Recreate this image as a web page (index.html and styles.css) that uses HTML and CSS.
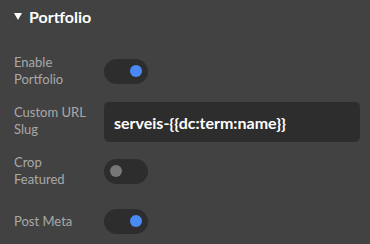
FILE: index.html
```html
<!DOCTYPE html>
<html>
<head>
<meta charset="utf-8">
<link rel="stylesheet" href="styles.css">
</head>
<body>
<div class="panel">
  <div class="header">
    <span class="caret"></span>
    <span class="title">Portfolio</span>
  </div>
  <div class="row">
    <div class="label">Enable<br>Portfolio</div>
    <div class="toggle on"><span class="knob"></span></div>
  </div>
  <div class="row">
    <div class="label">Custom URL<br>Slug</div>
    <div class="input">serveis-{{dc:term:name}}</div>
  </div>
  <div class="row">
    <div class="label">Crop<br>Featured</div>
    <div class="toggle"><span class="knob"></span></div>
  </div>
  <div class="row">
    <div class="label">Post Meta</div>
    <div class="toggle on"><span class="knob"></span></div>
  </div>
</div>
</body>
</html>
```
FILE: styles.css
```css
html, body {
  margin: 0;
  padding: 0;
  background: #424242;
}
.panel {
  width: 370px;
  height: 244px;
  background: #424242;
  font-family: Lato, "Open Sans", sans-serif;
}
.header {
  height: 46px;
  display: flex;
  align-items: flex-start;
  padding: 7px 0 0 14px;
  box-sizing: border-box;
}
.caret {
  width: 0;
  height: 0;
  border-left: 4px solid transparent;
  border-right: 4px solid transparent;
  border-top: 7px solid #ffffff;
  margin-top: 6px;
  margin-right: 7px;
}
.title {
  color: #ffffff;
  font-weight: 700;
  font-size: 16px;
  line-height: 19px;
}
.row {
  height: 50px;
  display: flex;
  align-items: center;
  padding-left: 14px;
}
.label {
  width: 90px;
  color: #a9a9a9;
  font-size: 13px;
  line-height: 17px;
}
.toggle {
  width: 44px;
  height: 25px;
  border-radius: 13px;
  background: #2d2d2d;
  display: flex;
  align-items: center;
  padding: 0 6px;
  box-sizing: border-box;
}
.toggle.on {
  justify-content: flex-end;
}
.knob {
  width: 12px;
  height: 12px;
  border-radius: 50%;
  background: #777777;
}
.toggle.on .knob {
  background: #4a8af4;
}
.input {
  width: 256px;
  height: 40px;
  margin-top: 2px;
  background: #2d2d2d;
  border-radius: 5px;
  box-sizing: border-box;
  padding-left: 10px;
  display: flex;
  align-items: center;
  color: #ffffff;
  font-weight: 700;
  font-size: 16px;
}
```
